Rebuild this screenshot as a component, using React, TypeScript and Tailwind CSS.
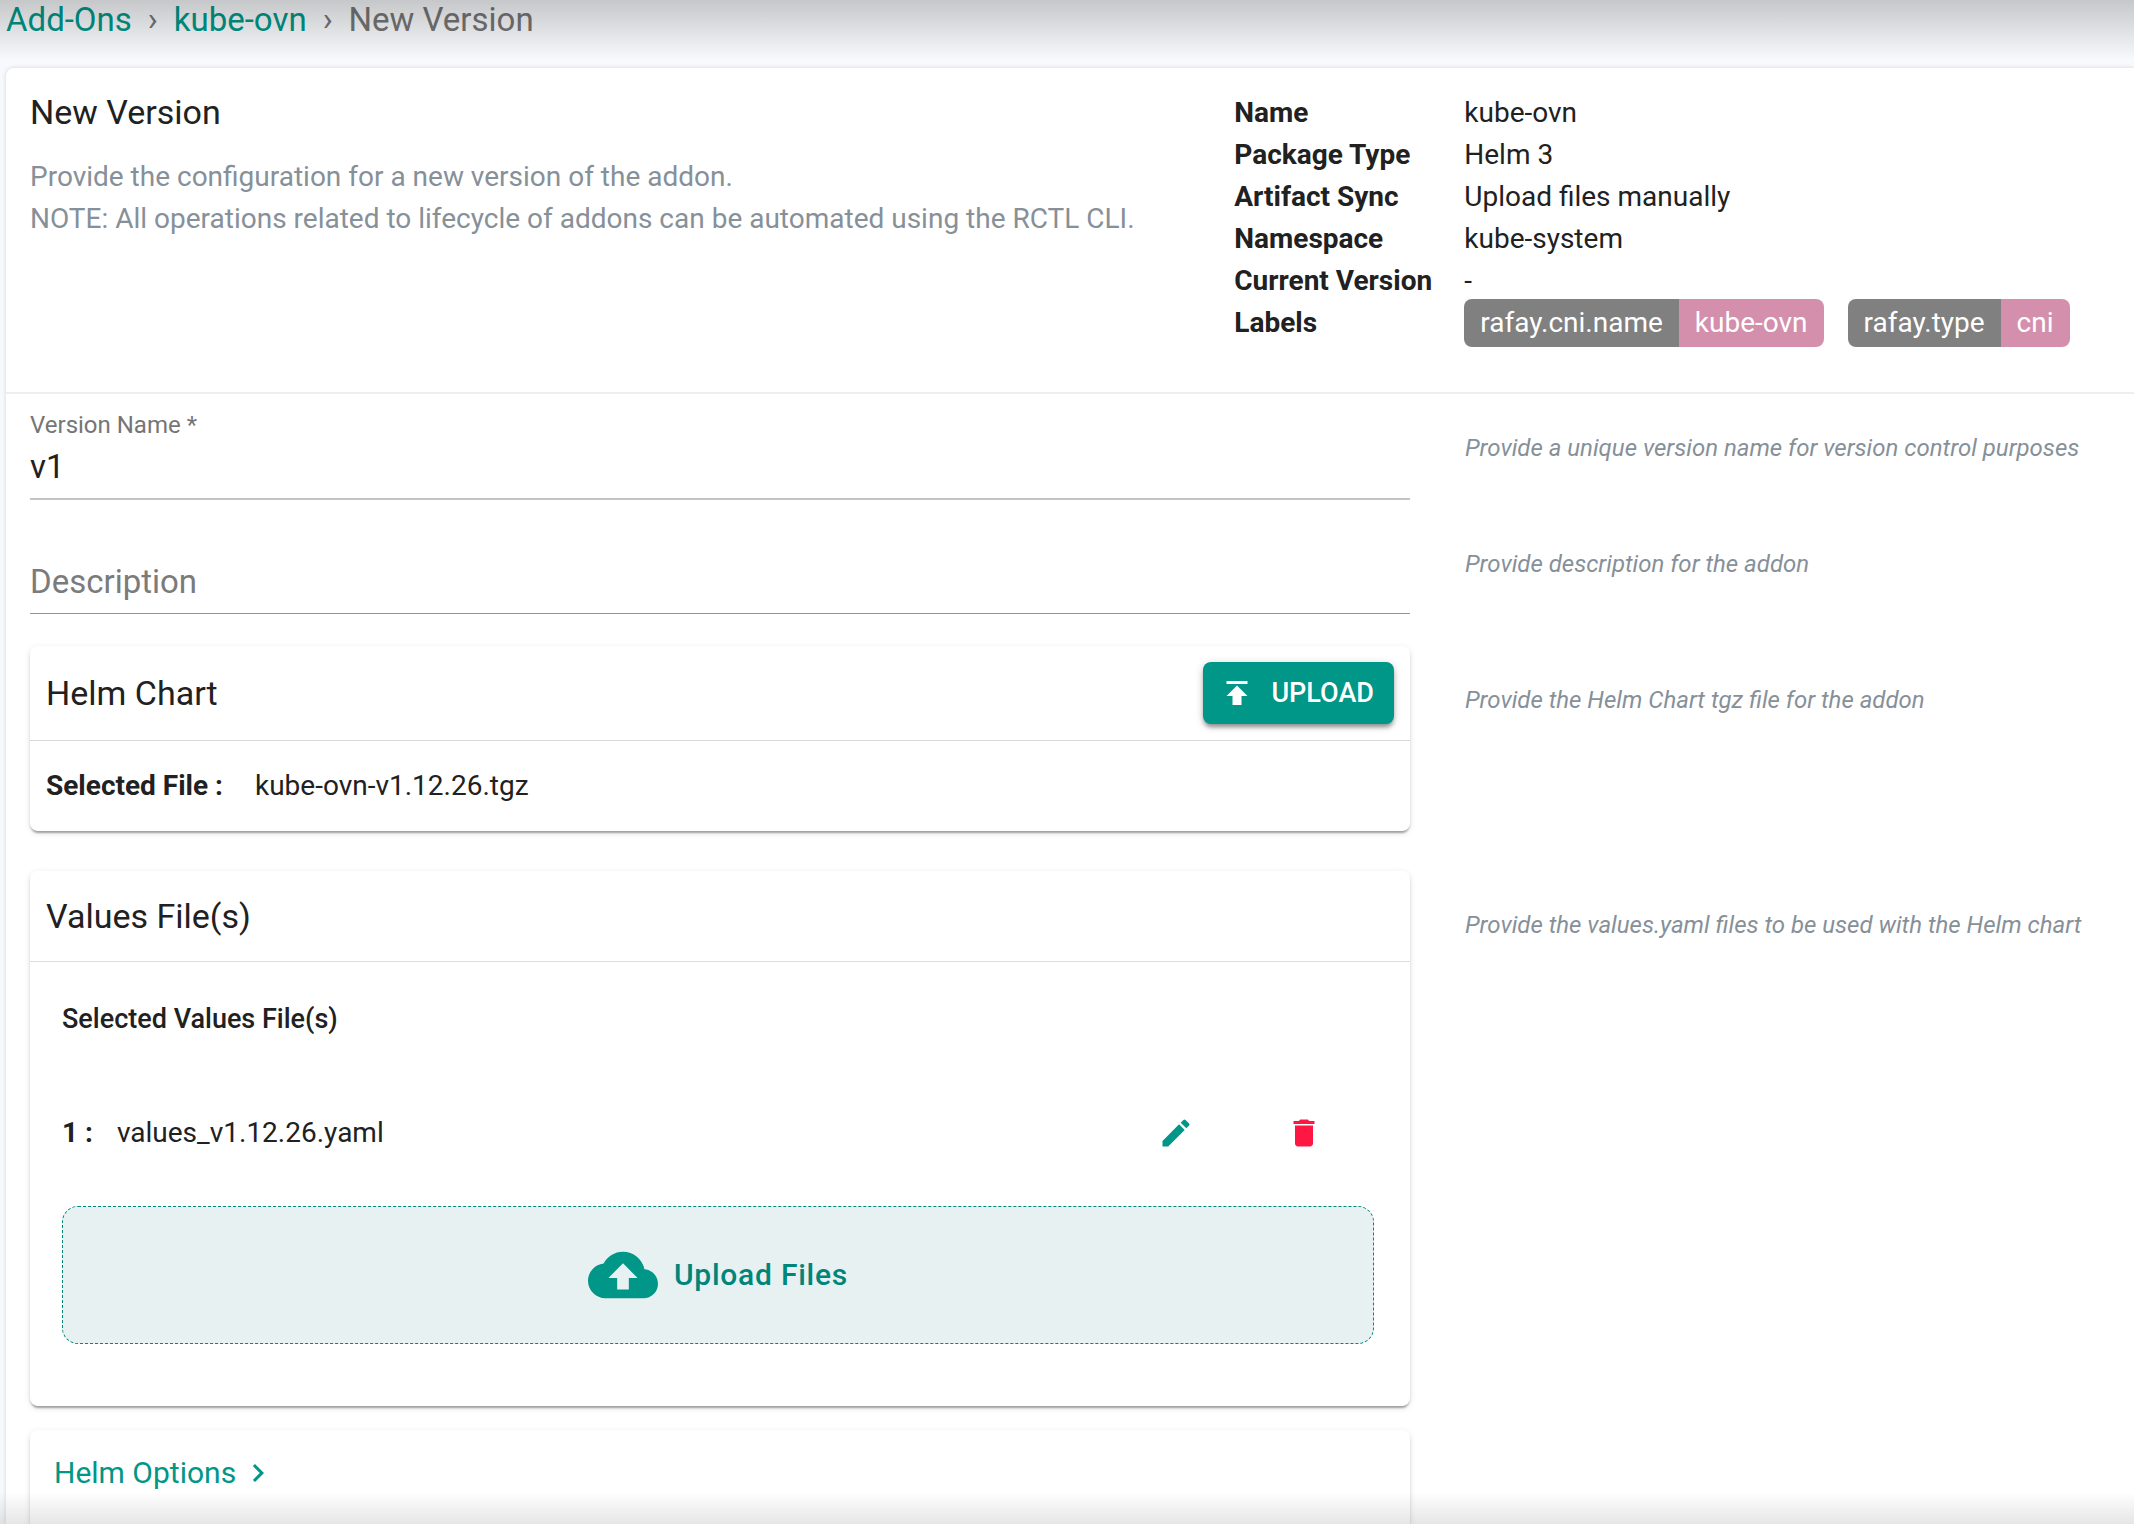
import type { ReactNode } from 'react';
import { useState } from 'react';
import { MdChevronRight, MdCloudUpload, MdDelete, MdEdit, MdPublish } from 'react-icons/md';

interface AddonLabel {
  name: string;
  value: string;
}

const details = [
  { term: 'Name', value: 'kube-ovn' },
  { term: 'Package Type', value: 'Helm 3' },
  { term: 'Artifact Sync', value: 'Upload files manually' },
  { term: 'Namespace', value: 'kube-system' },
  { term: 'Current Version', value: '-' }
];

const labels: AddonLabel[] = [
  { name: 'rafay.cni.name', value: 'kube-ovn' },
  { name: 'rafay.type', value: 'cni' }
];

const valuesFiles = ['values_v1.12.26.yaml'];

const cardShadow =
  'shadow-[0_4px_2px_-2px_rgba(0,0,0,0.2),0_2px_2px_0_rgba(0,0,0,0.14),0_2px_6px_0_rgba(0,0,0,0.12)]';

function Breadcrumbs() {
  return (
    <nav aria-label="Breadcrumb" className="px-1.5 pb-7 text-[33px] leading-10 text-[#757575]">
      <ol className="flex items-center gap-4">
        <li>
          <a href="#addons" className="text-[#009688]">Add-Ons</a>
        </li>
        <li aria-hidden="true">›</li>
        <li>
          <a href="#kube-ovn" className="text-[#009688]">kube-ovn</a>
        </li>
        <li aria-hidden="true">›</li>
        <li aria-current="page">New Version</li>
      </ol>
    </nav>
  );
}

function LabelTag({ name, value }: AddonLabel) {
  return (
    <span className="flex h-12 shrink-0 items-center overflow-hidden rounded-lg text-white">
      <span className="flex h-full items-center bg-[#808080] px-4">{name}</span>
      <span className="flex h-full items-center bg-[#d48fac] px-4">{value}</span>
    </span>
  );
}

function AddonDetails() {
  return (
    <dl className="grid grid-cols-[230px_1fr] pl-0.5 text-[28px] leading-[42px]">
      {details.map(({ term, value }) => (
        <div key={term} className="contents">
          <dt className="font-bold">{term}</dt>
          <dd>{value}</dd>
        </div>
      ))}
      <dt className="font-bold">Labels</dt>
      <dd className="flex h-[42px] items-center gap-6">
        {labels.map((label) => (
          <LabelTag key={label.name} {...label} />
        ))}
      </dd>
    </dl>
  );
}

function FormRow({ help, children }: { help?: string; children: ReactNode }) {
  return (
    <div className="grid grid-cols-[66fr_32fr] gap-x-[55px] pl-6">
      <div>{children}</div>
      {help ? <p className="pt-9 text-2xl leading-9 text-[#869099] italic">{help}</p> : null}
    </div>
  );
}

export default function App() {
  const [versionName, setVersionName] = useState('v1');
  const [description, setDescription] = useState('');

  return (
    <div className="relative flex min-h-screen flex-col overflow-x-clip bg-[#f7f9fc] font-['Roboto',sans-serif] text-[#212121]">
      <Breadcrumbs />

      <main className="ml-1.5 flex flex-1 flex-col rounded-tl-lg bg-white shadow-[0_0_4px_rgba(0,0,0,0.15)]">
        <header className="grid grid-cols-[4fr_3fr] border-b-2 border-[#eeeeee] pt-6 pb-12 pl-6">
          <div>
            <h1 className="text-[34px] leading-10">New Version</h1>
            <p className="mt-6 text-[28px] leading-[42px] text-[#869099]">
              Provide the configuration for a new version of the addon.
              <br />
              NOTE: All operations related to lifecycle of addons can be automated using the RCTL CLI.
            </p>
          </div>
          <AddonDetails />
        </header>

        <form className="flex flex-1 flex-col" onSubmit={(event) => event.preventDefault()}>
          <FormRow help="Provide a unique version name for version control purposes">
            <div className="flex flex-col pt-4 pb-2.5">
              <label htmlFor="version-name" className="text-2xl leading-[30px] text-[#757575]">
                Version Name *
              </label>
              <input
                id="version-name"
                type="text"
                required
                value={versionName}
                onChange={(event) => setVersionName(event.target.value)}
                className="mt-1.5 h-[54px] border-b-2 border-[#c4c4c4] pb-3 text-[33px] outline-none"
              />
            </div>
          </FormRow>

          <FormRow help="Provide description for the addon">
            <div className="grid pt-[52px] pb-8">
              {/* the label rests inside the empty field */}
              <label
                htmlFor="description"
                className={`pointer-events-none col-start-1 row-start-1 text-[33px] leading-10 text-[#7b7b7b] ${description ? 'invisible' : ''}`}
              >
                Description
              </label>
              <input
                id="description"
                type="text"
                value={description}
                onChange={(event) => setDescription(event.target.value)}
                className="col-start-1 row-start-1 h-[52px] border-b border-[#949494] pb-3 text-[33px] outline-none"
              />
            </div>
          </FormRow>

          <FormRow help="Provide the Helm Chart tgz file for the addon">
            <section className={`rounded-lg ${cardShadow}`}>
              <div className="flex items-center justify-between border-b border-[#d8d8d8] p-4">
                <h2 className="text-[34px] leading-[42px]">Helm Chart</h2>
                <button
                  type="button"
                  className="flex h-[62px] items-center gap-4 rounded-lg bg-[#009688] pr-5 pl-4 text-[27px] font-medium text-white shadow-[0_4px_4px_-1px_rgba(0,0,0,0.35),0_2px_8px_0_rgba(0,0,0,0.2)]"
                >
                  <MdPublish className="size-9" />
                  UPLOAD
                </button>
              </div>
              <p className="flex gap-8 px-4 py-6 text-[28px] leading-[42px]">
                <strong className="font-bold">Selected File :</strong>
                <span>kube-ovn-v1.12.26.tgz</span>
              </p>
            </section>
          </FormRow>

          <div className="h-10" />

          <FormRow help="Provide the values.yaml files to be used with the Helm chart">
            <section className={`rounded-lg ${cardShadow}`}>
              <div className="border-b border-[#dddddd] px-4 py-6">
                <h2 className="text-[34px] leading-[42px]">Values File(s)</h2>
              </div>
              <div className="pt-9 pr-9 pb-[62px] pl-8 text-[28px] leading-[42px]">
                <h3 className="text-[27px] font-medium">Selected Values File(s)</h3>
                <ol className="mt-[72px]">
                  {valuesFiles.map((file, index) => (
                    <li key={file} className="flex items-center">
                      <strong className="font-bold">{index + 1} :</strong>
                      <span className="ml-6 flex-1">{file}</span>
                      <button type="button" aria-label={`Edit ${file}`} className="mr-[92px] text-[#009688]">
                        <MdEdit className="size-9" />
                      </button>
                      <button type="button" aria-label={`Delete ${file}`} className="mr-[52px] text-[#ff1744]">
                        <MdDelete className="size-9" />
                      </button>
                    </li>
                  ))}
                </ol>
                <button
                  type="button"
                  className="mt-[52px] flex h-[138px] w-full items-center justify-center gap-4 rounded-2xl border border-dashed border-[#00897b] bg-[#e8f1f2] text-[30px] font-medium tracking-wide text-[#00857b]"
                >
                  <MdCloudUpload className="size-[70px] text-[#009688]" />
                  Upload Files
                </button>
              </div>
            </section>
          </FormRow>

          <div className="mt-6 grid flex-1 grid-cols-[66fr_32fr] gap-x-[55px] pl-6">
            <section className={`rounded-t-lg px-6 pt-[22px] ${cardShadow}`}>
              <button type="button" className="flex items-center gap-1 text-[30px] leading-[42px] text-[#009688]">
                Helm Options
                <MdChevronRight className="size-9" />
              </button>
            </section>
          </div>
        </form>
      </main>

      {/* scroll shades at both ends of the pane */}
      <div className="pointer-events-none absolute inset-x-0 top-0 h-[60px] bg-linear-to-b from-black/20 to-transparent" />
      <div className="pointer-events-none absolute inset-x-0 bottom-0 h-8 bg-linear-to-t from-black/10 to-transparent" />
    </div>
  );
}
